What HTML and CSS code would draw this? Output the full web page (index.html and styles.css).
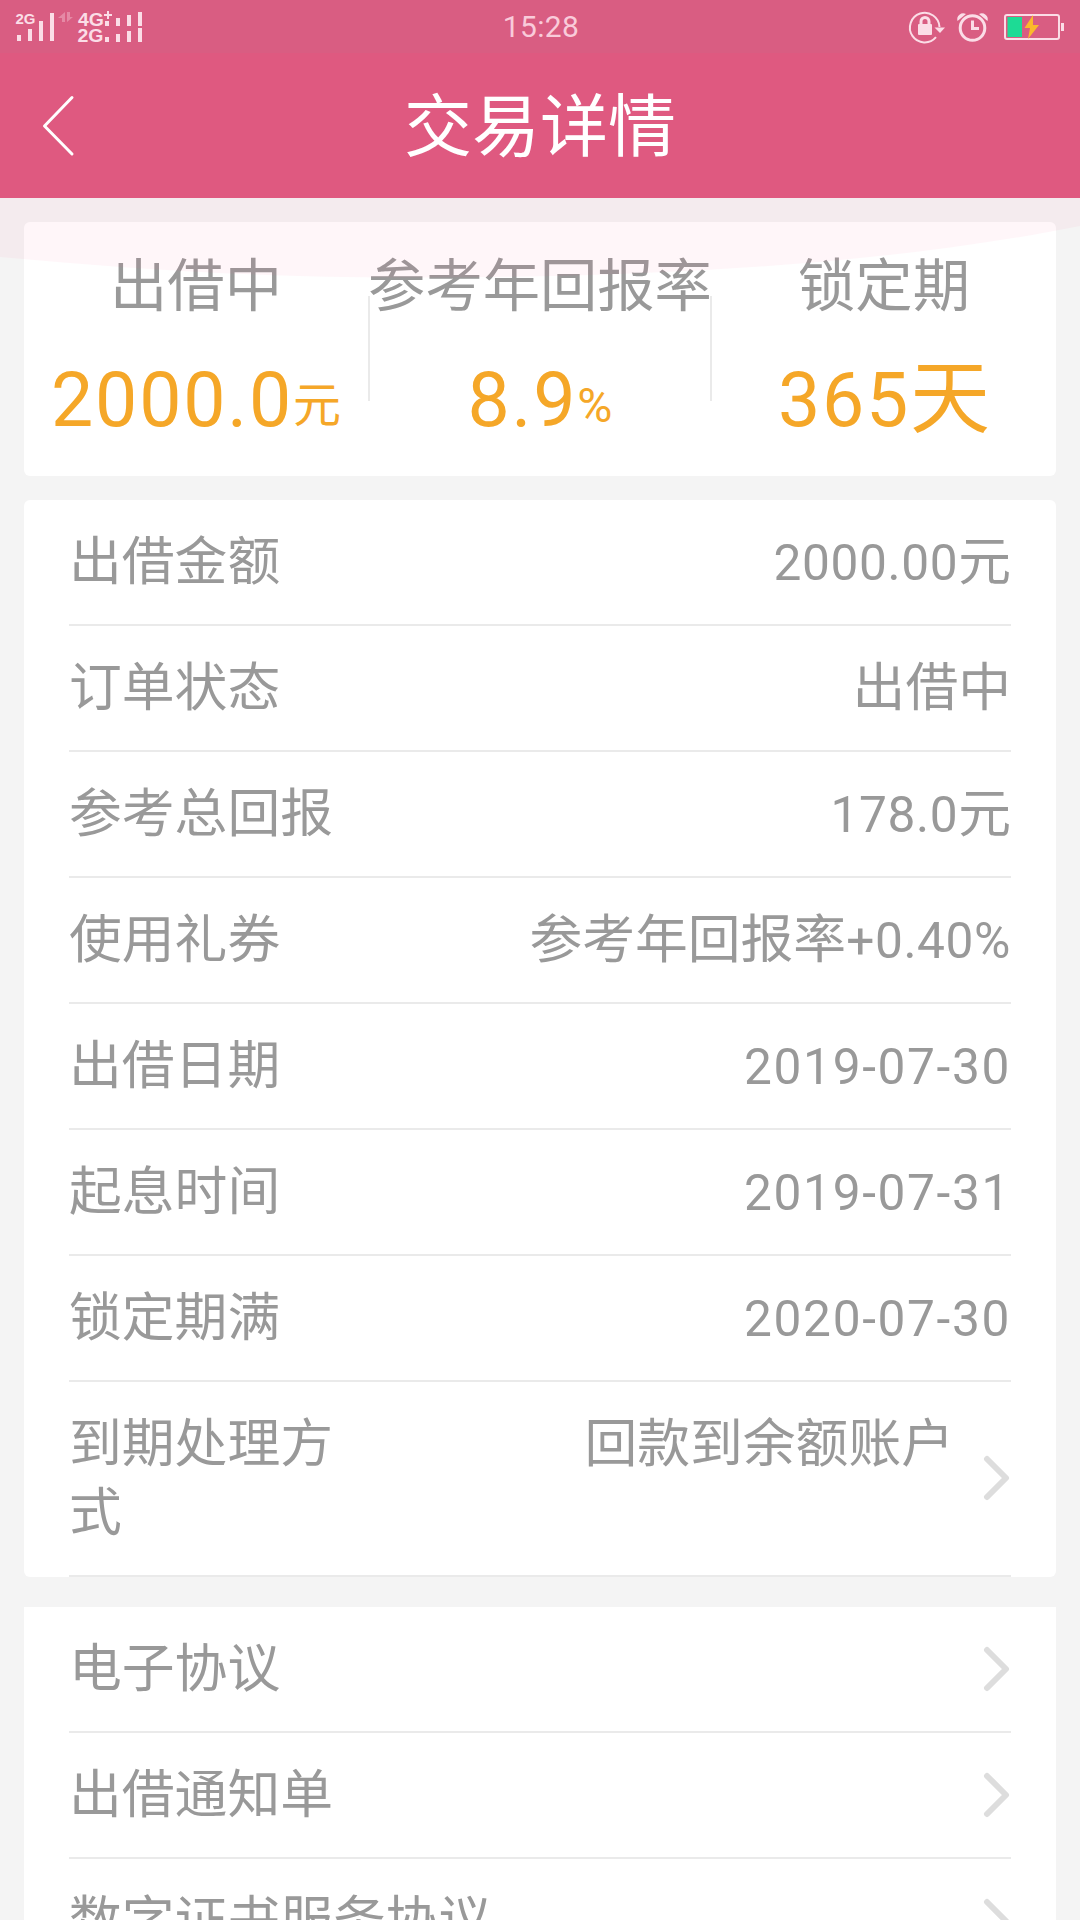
FILE: index.html
```html
<!DOCTYPE html>
<html lang="zh-CN">
<head>
  <meta charset="UTF-8">
  <meta name="viewport" content="width=device-width, initial-scale=1.0">
  <title>交易详情</title>
  <link rel="stylesheet" href="styles.css">
</head>
<body>
  <div class="status-bar">
    <svg class="signal" width="160" height="53" viewBox="0 0 160 53">
      <text x="15.5" y="24" class="net-small" textLength="20" lengthAdjust="spacingAndGlyphs">2G</text>
      <path d="M17 35h4v6h-4zM28 29h4v12h-4zM39 21h4v20h-4zM50 13h4v28h-4z"/>
      <path class="dim" d="M65 12v10h-3v-4h-4zM67 12v10l6-5h-3v-5z"/>
      <text x="78" y="26" class="net" textLength="26" lengthAdjust="spacingAndGlyphs">4G</text>
      <text x="77.5" y="42" class="net" textLength="26" lengthAdjust="spacingAndGlyphs">2G</text>
      <path d="M107 11h2v3h3v2h-3v3h-2v-3h-3v-2h3z"/>
      <path d="M105 21h4v5h-4zM116 18h4v8h-4zM127 15h4v11h-4zM138 12h4v14h-4z"/>
      <path d="M105 37h4v5h-4zM116 34h4v8h-4zM127 31h4v11h-4zM138 28h4v14h-4z"/>
    </svg>
    <span class="time">15:28</span>
    <svg class="system" width="180" height="53" viewBox="900 0 180 53">
      <!-- rotation lock -->
      <path class="line" d="M939.5 27A14.8 14.8 0 1 0 936 37.2"/>
      <path d="M934.5 27.5h10.5l-5 5.5z"/>
      <rect x="918" y="24" width="14" height="11" rx="1"/>
      <path class="line thick" d="M921 25v-3.5a4 4 0 0 1 8 0v3.5"/>
      <!-- alarm -->
      <circle class="line thick" cx="972.5" cy="28" r="12.3"/>
      <path class="line thick" d="M972.5 20.5v8h6.5"/>
      <path d="M957.5 21a6 6 0 0 1 8.5-7zM987.5 21a6 6 0 0 0-8.5-7z"/>
      <!-- battery -->
      <rect class="line" x="1005" y="15" width="54" height="24" rx="2"/>
      <path d="M1061 23h3v8h-3z"/>
      <path class="charge" d="M1007.5 17h14.5v20h-14.5z"/>
      <path class="bolt" d="M1033 15l-8.500 13h5.500l-2 11 11-14h-6z"/>
    </svg>
  </div>

  <div class="header">
    <svg class="back" width="36" height="62" viewBox="0 0 36 62">
      <path d="M33 2.500L5.500 31L33 59"/>
    </svg>
    <h1>交易详情</h1>
  </div>

  <div class="content">
    <svg class="wave" width="1080" height="82" viewBox="0 198 1080 82">
      <path d="M0 198V257C130 269 260 277.500 400 277.500C640 278 880 266 1080 226V198z"/>
    </svg>

    <div class="card summary">
      <div class="summary-item">
        <div class="summary-label">出借中</div>
        <div class="summary-value"><span class="num">2000.0</span><small>元</small></div>
      </div>
      <div class="summary-item middle">
        <div class="summary-label">参考年回报率</div>
        <div class="summary-value"><span class="num decimal">8.9</span><small>%</small></div>
      </div>
      <div class="summary-item">
        <div class="summary-label">锁定期</div>
        <div class="summary-value"><span class="num">365</span>天</div>
      </div>
    </div>

    <div class="card list">
      <div class="row"><span class="label">出借金额</span><span class="value"><span class="num decimal">2000.00</span>元</span></div>
      <div class="row"><span class="label">订单状态</span><span class="value">出借中</span></div>
      <div class="row"><span class="label">参考总回报</span><span class="value"><span class="num decimal">178.0</span>元</span></div>
      <div class="row"><span class="label">使用礼券</span><span class="value">参考年回报率<span class="num decimal">+0.40%</span></span></div>
      <div class="row"><span class="label">出借日期</span><span class="value"><span class="num">2019-07-30</span></span></div>
      <div class="row"><span class="label">起息时间</span><span class="value"><span class="num">2019-07-31</span></span></div>
      <div class="row"><span class="label">锁定期满</span><span class="value"><span class="num">2020-07-30</span></span></div>
      <div class="row">
        <span class="label">到期处理方式</span>
        <span class="value">回款到余额账户</span>
        <svg class="arrow" width="27" height="46" viewBox="0 0 27 46"><path d="M4 4l19 19L4 42"/></svg>
      </div>
    </div>

    <div class="card list links">
      <div class="row">
        <span class="label">电子协议</span>
        <svg class="arrow" width="27" height="46" viewBox="0 0 27 46"><path d="M4 4l19 19L4 42"/></svg>
      </div>
      <div class="row">
        <span class="label">出借通知单</span>
        <svg class="arrow" width="27" height="46" viewBox="0 0 27 46"><path d="M4 4l19 19L4 42"/></svg>
      </div>
      <div class="row">
        <span class="label">数字证书服务协议</span>
        <svg class="arrow" width="27" height="46" viewBox="0 0 27 46"><path d="M4 4l19 19L4 42"/></svg>
      </div>
    </div>
  </div>
</body>
</html>
```

FILE: styles.css
```css
* {
  box-sizing: border-box;
}

body {
  margin: 0;
  height: 1920px;
  overflow: hidden;
  background-color: #f4f4f4;
  color: #999;
  font-family: Roboto, "Noto Sans CJK SC", sans-serif;
  font-size: 52.8px;
}

/* status bar */
.status-bar {
  display: flex;
  justify-content: space-between;
  height: 53px;
  background-color: #d95d82;
}

.status-bar svg {
  fill: #fbdde7;
}

.signal {
  margin-right: 22px;
}

.net,
.net-small {
  font-family: "Liberation Sans", sans-serif;
  font-weight: bold;
  font-size: 19px;
}

.net-small {
  font-size: 15px;
}

.signal .dim {
  opacity: 0.35;
}

.time {
  color: #f9cbda;
  font-size: 30px;
  line-height: 54px;
  letter-spacing: 0.4px;
}

.system .line {
  fill: none;
  stroke: #fbdde7;
  stroke-width: 2;
}

.system .thick {
  stroke-width: 3;
}

.system .charge {
  fill: #1ddb95;
}

.system .bolt {
  fill: #fbb92c;
}

/* header */
.header {
  display: flex;
  align-items: center;
  height: 145px;
  padding: 0 39px;
  background-color: #df5980;
}

.header h1 {
  flex: 1;
  margin: 0 36px 0 0;
  padding-top: 4px;
  color: #fff;
  font-size: 68px;
  font-weight: normal;
  line-height: 100px;
  text-align: center;
}

.back path {
  fill: none;
  stroke: #fff;
  stroke-width: 3;
  stroke-linecap: round;
  stroke-linejoin: round;
}

/* cards */
.content {
  position: relative;
  padding: 24px 24px 0;
}

.wave {
  position: absolute;
  top: 0;
  left: 0;
  z-index: 1;
  fill: rgba(255, 90, 140, 0.055);
}

.card {
  margin-bottom: 24px;
  border-radius: 6px;
  background-color: #fff;
}

.num {
  font-size: 0.94em;
  letter-spacing: 0.033em;
  line-height: 1;
}

.decimal {
  letter-spacing: 0.012em;
}

.summary {
  display: flex;
  height: 254px;
}

.summary-item {
  position: relative;
  width: 344px;
  padding-top: 30px;
  text-align: center;
  white-space: nowrap;
}

/* lines between the columns */
.middle::before,
.middle::after {
  content: "";
  position: absolute;
  top: 74px;
  left: 0;
  width: 2px;
  height: 105px;
  background-color: #eaeaea;
}

.middle::after {
  left: auto;
  right: 0;
}

.summary-label {
  font-size: 57.3px;
  line-height: 70px;
}

.summary-value {
  color: #f5a728;
  font-size: 80px;
  line-height: 100px;
  margin-top: 27px;
}

.summary-value .num {
  letter-spacing: 0.024em;
}

.summary-value small {
  font-size: 48px;
  line-height: 1;
  vertical-align: 4px;
}

.list {
  padding: 0 45px;
}

.row {
  display: flex;
  align-items: center;
  padding: 28px 0 27px;
  border-bottom: 2px solid #eaeaea;
  line-height: 69px;
}

.label {
  width: 280px;
}

.value {
  flex: 1;
  align-self: flex-start;
  text-align: right;
  white-space: nowrap;
}

.arrow {
  margin: 0 1px 2px 29px;
  fill: none;
  stroke: #ddd;
  stroke-width: 6;
  stroke-linecap: round;
  stroke-linejoin: round;
}

.links {
  margin-top: 30px;
  border-radius: 0;
}

.links .row {
  justify-content: space-between;
}

.links .label {
  width: auto;
}
```
